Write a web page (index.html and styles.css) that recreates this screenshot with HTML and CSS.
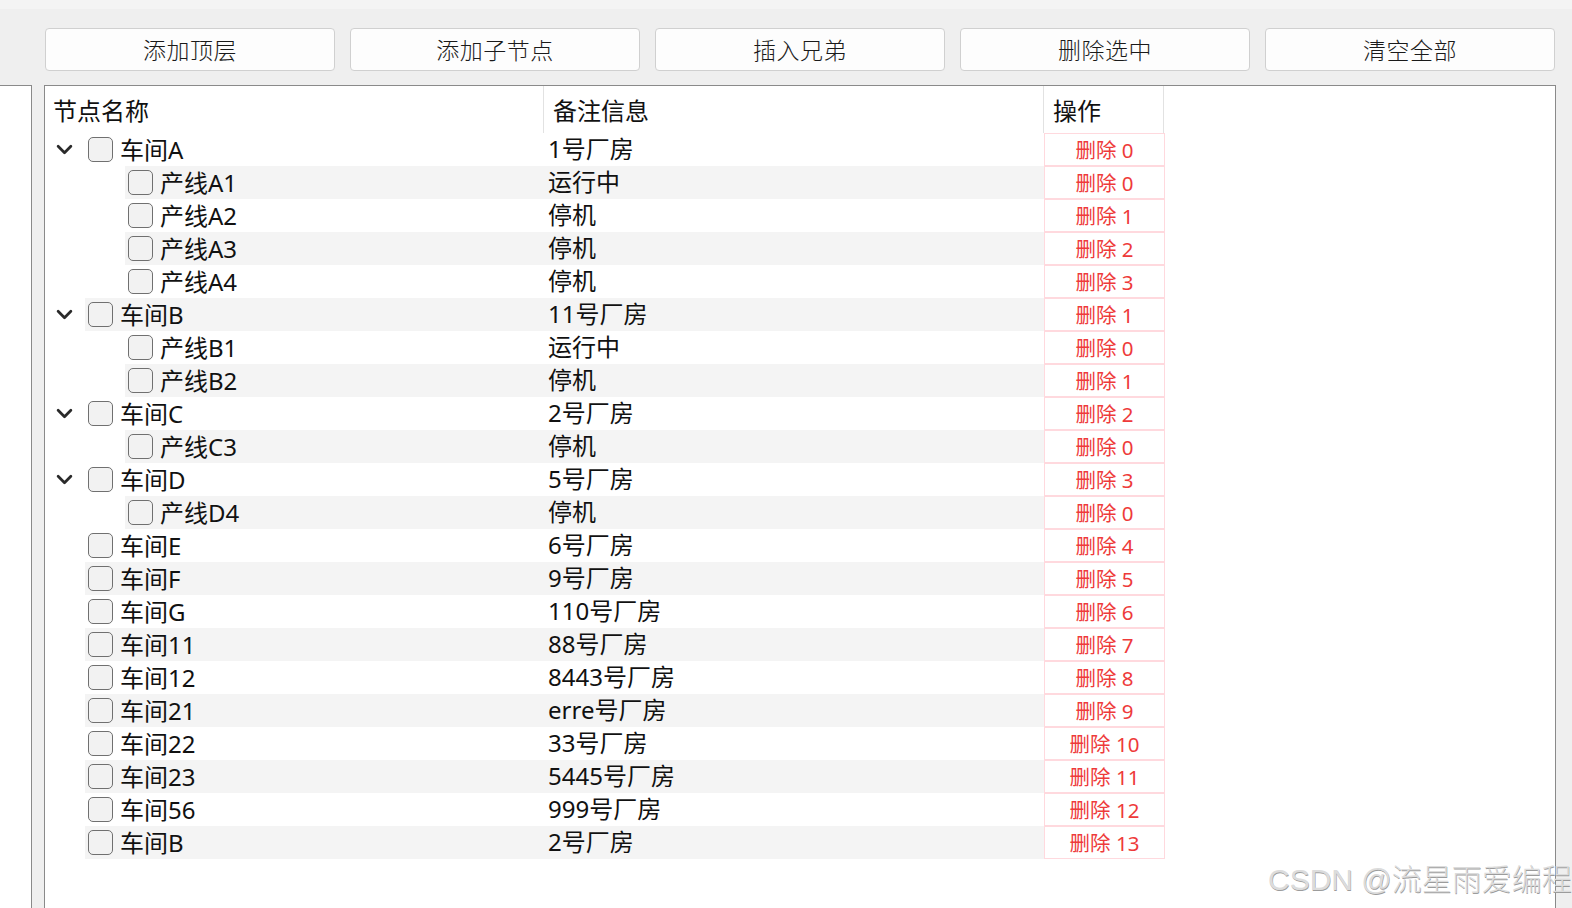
FILE: index.html
```html
<!DOCTYPE html>
<html lang="zh-CN">
<head>
<meta charset="utf-8">
<title>树形表格</title>
<link rel="stylesheet" href="styles.css">
</head>
<body>
<div class="app">
  <div class="topline"></div>
  <div class="toolbar">
    <button class="tool-btn">添加顶层</button>
    <button class="tool-btn">添加子节点</button>
    <button class="tool-btn">插入兄弟</button>
    <button class="tool-btn">删除选中</button>
    <button class="tool-btn">清空全部</button>
  </div>
  <div class="main">
    <div class="side-panel"></div>
    <div class="tree">
      <div class="tree-head">
        <div class="hcell c-name">节点名称</div>
        <div class="hcell c-note">备注信息</div>
        <div class="hcell c-op">操作</div>
      </div>
      <div class="tree-body">
        <div class="row top"><div class="cell c-name"><span class="branch"><svg viewBox="0 0 16 10" class="chev"><polyline points="2,2 8,8 14,2"/></svg></span><span class="item"><span class="check"></span><span class="label">车间A</span></span></div><div class="cell c-note">1号厂房</div><div class="cell c-op"><span class="del">删除 0</span></div></div>
        <div class="row child alt"><div class="cell c-name"><span class="branch"></span><span class="item"><span class="check"></span><span class="label">产线A1</span></span></div><div class="cell c-note">运行中</div><div class="cell c-op"><span class="del">删除 0</span></div></div>
        <div class="row child"><div class="cell c-name"><span class="branch"></span><span class="item"><span class="check"></span><span class="label">产线A2</span></span></div><div class="cell c-note">停机</div><div class="cell c-op"><span class="del">删除 1</span></div></div>
        <div class="row child alt"><div class="cell c-name"><span class="branch"></span><span class="item"><span class="check"></span><span class="label">产线A3</span></span></div><div class="cell c-note">停机</div><div class="cell c-op"><span class="del">删除 2</span></div></div>
        <div class="row child"><div class="cell c-name"><span class="branch"></span><span class="item"><span class="check"></span><span class="label">产线A4</span></span></div><div class="cell c-note">停机</div><div class="cell c-op"><span class="del">删除 3</span></div></div>
        <div class="row top alt"><div class="cell c-name"><span class="branch"><svg viewBox="0 0 16 10" class="chev"><polyline points="2,2 8,8 14,2"/></svg></span><span class="item"><span class="check"></span><span class="label">车间B</span></span></div><div class="cell c-note">11号厂房</div><div class="cell c-op"><span class="del">删除 1</span></div></div>
        <div class="row child"><div class="cell c-name"><span class="branch"></span><span class="item"><span class="check"></span><span class="label">产线B1</span></span></div><div class="cell c-note">运行中</div><div class="cell c-op"><span class="del">删除 0</span></div></div>
        <div class="row child alt"><div class="cell c-name"><span class="branch"></span><span class="item"><span class="check"></span><span class="label">产线B2</span></span></div><div class="cell c-note">停机</div><div class="cell c-op"><span class="del">删除 1</span></div></div>
        <div class="row top"><div class="cell c-name"><span class="branch"><svg viewBox="0 0 16 10" class="chev"><polyline points="2,2 8,8 14,2"/></svg></span><span class="item"><span class="check"></span><span class="label">车间C</span></span></div><div class="cell c-note">2号厂房</div><div class="cell c-op"><span class="del">删除 2</span></div></div>
        <div class="row child alt"><div class="cell c-name"><span class="branch"></span><span class="item"><span class="check"></span><span class="label">产线C3</span></span></div><div class="cell c-note">停机</div><div class="cell c-op"><span class="del">删除 0</span></div></div>
        <div class="row top"><div class="cell c-name"><span class="branch"><svg viewBox="0 0 16 10" class="chev"><polyline points="2,2 8,8 14,2"/></svg></span><span class="item"><span class="check"></span><span class="label">车间D</span></span></div><div class="cell c-note">5号厂房</div><div class="cell c-op"><span class="del">删除 3</span></div></div>
        <div class="row child alt"><div class="cell c-name"><span class="branch"></span><span class="item"><span class="check"></span><span class="label">产线D4</span></span></div><div class="cell c-note">停机</div><div class="cell c-op"><span class="del">删除 0</span></div></div>
        <div class="row top"><div class="cell c-name"><span class="branch"></span><span class="item"><span class="check"></span><span class="label">车间E</span></span></div><div class="cell c-note">6号厂房</div><div class="cell c-op"><span class="del">删除 4</span></div></div>
        <div class="row top alt"><div class="cell c-name"><span class="branch"></span><span class="item"><span class="check"></span><span class="label">车间F</span></span></div><div class="cell c-note">9号厂房</div><div class="cell c-op"><span class="del">删除 5</span></div></div>
        <div class="row top"><div class="cell c-name"><span class="branch"></span><span class="item"><span class="check"></span><span class="label">车间G</span></span></div><div class="cell c-note">110号厂房</div><div class="cell c-op"><span class="del">删除 6</span></div></div>
        <div class="row top alt"><div class="cell c-name"><span class="branch"></span><span class="item"><span class="check"></span><span class="label">车间11</span></span></div><div class="cell c-note">88号厂房</div><div class="cell c-op"><span class="del">删除 7</span></div></div>
        <div class="row top"><div class="cell c-name"><span class="branch"></span><span class="item"><span class="check"></span><span class="label">车间12</span></span></div><div class="cell c-note">8443号厂房</div><div class="cell c-op"><span class="del">删除 8</span></div></div>
        <div class="row top alt"><div class="cell c-name"><span class="branch"></span><span class="item"><span class="check"></span><span class="label">车间21</span></span></div><div class="cell c-note">erre号厂房</div><div class="cell c-op"><span class="del">删除 9</span></div></div>
        <div class="row top"><div class="cell c-name"><span class="branch"></span><span class="item"><span class="check"></span><span class="label">车间22</span></span></div><div class="cell c-note">33号厂房</div><div class="cell c-op"><span class="del">删除 10</span></div></div>
        <div class="row top alt"><div class="cell c-name"><span class="branch"></span><span class="item"><span class="check"></span><span class="label">车间23</span></span></div><div class="cell c-note">5445号厂房</div><div class="cell c-op"><span class="del">删除 11</span></div></div>
        <div class="row top"><div class="cell c-name"><span class="branch"></span><span class="item"><span class="check"></span><span class="label">车间56</span></span></div><div class="cell c-note">999号厂房</div><div class="cell c-op"><span class="del">删除 12</span></div></div>
        <div class="row top alt"><div class="cell c-name"><span class="branch"></span><span class="item"><span class="check"></span><span class="label">车间B</span></span></div><div class="cell c-note">2号厂房</div><div class="cell c-op"><span class="del">删除 13</span></div></div>
      </div>
    </div>
  </div>
  <div class="watermark">CSDN @流星雨爱编程</div>
</div>
</body>
</html>
```

FILE: styles.css
```css
* {
  box-sizing: border-box;
}

html, body {
  margin: 0;
  padding: 0;
  width: 1572px;
  height: 908px;
  overflow: hidden;
}

body {
  background: #efefef;
  font-family: "Noto Sans", "Noto Sans CJK SC", sans-serif;
  color: #111;
}

.app {
  position: relative;
  width: 1572px;
  height: 908px;
}

.topline {
  height: 9px;
  background: #f4f4f4;
}

/* toolbar with five equal buttons */
.toolbar {
  display: flex;
  gap: 15px;
  margin-top: 19px;
  padding-left: 45px;
  height: 43px;
}

.tool-btn {
  width: 290px;
  height: 43px;
  background: #fdfdfd;
  border: 1px solid #d0d0d0;
  border-radius: 4px;
  font-family: "Noto Sans CJK SC", sans-serif;
  font-weight: 300;
  font-size: 23px;
  color: #1a1a1a;
  padding: 0 0 1px;
  letter-spacing: 0.5px;
}

.main {
  display: flex;
  margin-top: 14px;
  height: 823px;
}

.side-panel {
  width: 32px;
  height: 100%;
  background: #ffffff;
  border-top: 1px solid #8a8a8a;
  border-right: 1px solid #8a8a8a;
}

.tree {
  margin-left: 12px;
  width: 1512px;
  height: 100%;
  background: #ffffff;
  border: 1px solid #8a8a8a;
  border-bottom: none;
}

.tree-head {
  display: flex;
  height: 47px;
}

.hcell {
  height: 47px;
  line-height: 49px;
  font-size: 24px;
  border-right: 1px solid #e2e2e2;
  color: #111;
}

.hcell.c-name {
  width: 499px;
  padding-left: 8px;
}

.hcell.c-note {
  width: 500px;
  padding-left: 9px;
}

.hcell.c-op {
  width: 120px;
  padding-left: 9px;
}

.row {
  display: flex;
  height: 33px;
  font-size: 24px;
  line-height: 32px;
}

.cell {
  height: 33px;
}

.cell.c-name {
  width: 499px;
  display: flex;
}

.row.child .cell.c-name {
  padding-left: 40px;
}

.branch {
  width: 40px;
  height: 33px;
  display: flex;
  align-items: center;
  padding-left: 11px;
}

.chev {
  width: 17px;
  height: 11px;
}

.chev polyline {
  fill: none;
  stroke: #2a2a2a;
  stroke-width: 2.6;
  stroke-linecap: round;
  stroke-linejoin: round;
}

.item {
  flex: 1;
  display: flex;
  align-items: center;
  padding-left: 3px;
  height: 33px;
}

.check {
  width: 25px;
  height: 25px;
  border: 1.5px solid #707070;
  border-radius: 5px;
  background: #f2f2f2;
  margin-right: 7px;
  flex: none;
}

.label {
  white-space: nowrap;
}

.cell.c-note {
  width: 500px;
  padding-left: 4px;
  white-space: nowrap;
}

.row.alt .item,
.row.alt .cell.c-note {
  background: #f4f4f4;
}

.cell.c-op {
  width: 121px;
}

.del {
  display: block;
  height: 33px;
  border: 1px solid #ffd9de;
  background: #ffffff;
  color: #ee3a3a;
  font-size: 20.5px;
  line-height: 32px;
  text-align: center;
}

/* faint signature over the lower right corner */
.watermark {
  position: absolute;
  left: 1268px;
  top: 860px;
  font-size: 30px;
  line-height: 40px;
  color: #dcdcdc;
  text-shadow: 0.5px 0.5px 0.5px #9c9c9c;
  white-space: nowrap;
  font-family: "Liberation Sans", "Noto Sans CJK SC", sans-serif;
  font-weight: 300;
}
```
